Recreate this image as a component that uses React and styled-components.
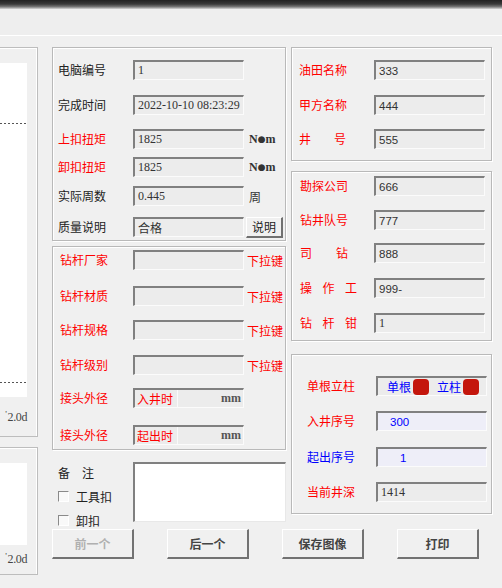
import React from "react";
import styled, { createGlobalStyle } from "styled-components";

const CJK = `"Noto Sans CJK SC", "Noto Sans", sans-serif`;
const SERIF = `"Liberation Serif", "Noto Sans CJK SC", serif`;
const SANS = `"Liberation Sans", "Noto Sans CJK SC", sans-serif`;
const RED = "#ff0000";
const BLUE = "#0000ff";

const Global = createGlobalStyle`
  html, body { margin: 0; padding: 0; background: #f0f0f0; }
  * { box-sizing: border-box; }
`;

const Page = styled.div`
  width: 502px;
  height: 588px;
  overflow: hidden;
  background: #f0f0f0;
  display: flex;
  flex-direction: column;
  font-family: ${CJK};
  font-size: 12px;
  color: #222;
`;

const TitleEdge = styled.div`
  height: 9px;
  flex: none;
  background: linear-gradient(#222 0%, #3a3a3a 45%, #777 75%, #d6d6d6 100%);
`;

const ToolStrip = styled.div`
  height: 27px;
  flex: none;
  background: #eeeeee;
  border-bottom: 1px solid #ffffff;
`;

const Body = styled.div`
  display: flex;
  padding-top: 11px;
`;

const LeftCol = styled.div`
  width: 38px;
  margin-right: 14px;
  flex: none;
  display: flex;
  flex-direction: column;
  gap: 10px;
`;

const ChartFrame = styled.div`
  height: ${(p) => p.$h}px;
  border: 1px solid #bdbdbd;
  border-left: none;
  box-shadow: inset -1px 0 0 #fff, inset 0 1px 0 #fff;
  padding: 15px 10px 0 0;
  display: flex;
  flex-direction: column;
`;

const Plot = styled.svg`
  display: block;
  width: 27px;
  height: ${(p) => p.$h}px;
  background: #fff;
`;

const AxisText = styled.div`
  margin-top: ${(p) => p.$mt}px;
  text-align: right;
  font-family: ${SERIF};
  font-size: 12px;
  line-height: 15px;
  color: #444;
  letter-spacing: -0.4px;
`;

const Tick = styled.span`
  font-size: 9px;
  vertical-align: 4px;
  margin-right: 1px;
`;

const RightArea = styled.div`
  width: 440px;
  display: flex;
  flex-direction: column;
`;

const Columns = styled.div`
  display: flex;
  gap: 5px;
  align-items: flex-start;
`;

const Column = styled.div`
  width: ${(p) => p.$w}px;
  display: flex;
  flex-direction: column;
`;

const Group = styled.div`
  height: ${(p) => p.$h}px;
  margin-top: ${(p) => p.$mt || 0}px;
  border: 1px solid #b9b9b9;
  box-shadow: inset 1px 1px 0 #fff, 1px 1px 0 #fff;
  padding-left: ${(p) => p.$pl}px;
  display: flex;
  flex-direction: column;
`;

const Row = styled.div`
  display: flex;
  align-items: center;
  height: 20px;
  flex: none;
  margin-top: ${(p) => p.$mt}px;
`;

const Label = styled.div`
  width: ${(p) => p.$w}px;
  flex: none;
  color: ${(p) => p.$c || "#222"};
  font-family: ${CJK};
  font-size: 12px;
  line-height: 14px;
  white-space: nowrap;
`;

const Spread = styled.span`
  display: inline-flex;
  justify-content: space-between;
  width: ${(p) => p.$w}px;
`;

const Field = styled.div`
  width: ${(p) => p.$w || 111}px;
  height: 20px;
  flex: none;
  background: ${(p) => p.$bg || "#ececec"};
  border-top: 2px solid #808080;
  border-left: 2px solid #808080;
  border-right: 1px solid #fbfbfb;
  border-bottom: 1px solid #fbfbfb;
  display: flex;
  align-items: center;
  justify-content: ${(p) => (p.$between ? "space-between" : "flex-start")};
  padding-left: ${(p) => (p.$pl != null ? p.$pl : 3)}px;
  padding-right: 2px;
  font-family: ${(p) => (p.$cjk ? CJK : p.$sans ? SANS : SERIF)};
  font-size: ${(p) => (p.$sans ? 11.5 : 12)}px;
  color: ${(p) => p.$c || "#333"};
  white-space: nowrap;
`;

const SubLabel = styled.span`
  height: 100%;
  display: flex;
  align-items: center;
  padding: 0 4px 0 2px;
  border-right: 1px solid #fafafa;
  color: ${RED};
  font-family: ${CJK};
  font-size: 12px;
`;

const MM = styled.span`
  font-family: ${SERIF};
  font-weight: bold;
  font-size: 12px;
  color: #555;
`;

const Unit = styled.span`
  margin-left: ${(p) => p.$ml}px;
  font-family: ${(p) => (p.$serif ? SERIF : CJK)};
  font-weight: ${(p) => (p.$serif ? "bold" : "normal")};
  font-size: 12px;
  color: ${(p) => p.$c || "#333"};
  white-space: nowrap;
`;

const Dot = styled.span`
  font-family: "DejaVu Sans", sans-serif;
  font-size: 9px;
  vertical-align: 1px;
`;

const SmallButton = styled.div`
  margin-left: 2px;
  width: 37px;
  height: 21px;
  border-top: 1px solid #fff;
  border-left: 1px solid #fff;
  border-right: 2px solid #707070;
  border-bottom: 2px solid #707070;
  display: flex;
  align-items: center;
  justify-content: center;
  font-size: 12px;
  color: #222;
`;

const Notes = styled.div`
  display: flex;
`;

const NotesLeft = styled.div`
  width: 81px;
  flex: none;
  padding: 12px 0 0 6px;
  display: flex;
  flex-direction: column;
  gap: 4px;
`;

const NoteLine = styled.div`
  height: 20px;
  display: flex;
  align-items: center;
  gap: 7px;
  font-size: 12px;
  color: #222;
`;

const CheckBox = styled.span`
  width: 11px;
  height: 11px;
  background: #f9f9f9;
  border-top: 1px solid #8a8a8a;
  border-left: 1px solid #8a8a8a;
  border-right: 1px solid #fff;
  border-bottom: 1px solid #fff;
`;

const TextArea = styled.div`
  margin-top: 12px;
  width: 153px;
  height: 60px;
  background: #fff;
  border-top: 2px solid #808080;
  border-left: 2px solid #808080;
  border-right: 1px solid #e8e8e8;
  border-bottom: 1px solid #e8e8e8;
`;

const ButtonRow = styled.div`
  display: flex;
  gap: 33px;
  margin-top: -1px;
`;

const Button = styled.div`
  width: 82px;
  height: 30px;
  border-top: 1px solid #fff;
  border-left: 1px solid #fff;
  border-right: 2px solid #727272;
  border-bottom: 2px solid #727272;
  background: #f0f0f0;
  display: flex;
  align-items: center;
  justify-content: center;
  font-size: 12px;
  font-weight: bold;
  color: ${(p) => (p.$disabled ? "#b0b0b0" : "#444")};
`;

const Choice = styled.span`
  color: ${BLUE};
  font-family: ${CJK};
  font-size: 12px;
  margin-left: ${(p) => p.$ml}px;
`;

const Swatch = styled.span`
  width: 16px;
  height: 16px;
  border-radius: 4px;
  background: #c4160c;
  margin-left: 2px;
`;

function Chart({ h, plotH, lines, axisMt }) {
  return (
    <ChartFrame $h={h}>
      <Plot $h={plotH} viewBox={`0 0 27 ${plotH}`}>
        {lines.map((y) => (
          <line key={y} x1="0" y1={y} x2="26" y2={y} stroke="#555" strokeWidth="1" strokeDasharray="2 2" />
        ))}
      </Plot>
      <AxisText $mt={axisMt}>
        <Tick>'</Tick>2.0d
      </AxisText>
    </ChartFrame>
  );
}

const NM = () => (
  <>
    N<Dot>●</Dot>m
  </>
);

export default function App() {
  return (
    <>
      <Global />
      <Page>
        <TitleEdge />
        <ToolStrip />
        <Body>
          <LeftCol>
            <Chart h={390} plotH={334} lines={[60.5, 319.5]} axisMt={10} />
            <Chart h={128} plotH={82} lines={[]} axisMt={4} />
          </LeftCol>
          <RightArea>
            <Columns>
              <Column $w={234}>
                <Group $h={194} $pl={5}>
                  <Row $mt={12}>
                    <Label $w={75}>电脑编号</Label>
                    <Field>1</Field>
                  </Row>
                  <Row $mt={15}>
                    <Label $w={75}>完成时间</Label>
                    <Field>2022-10-10 08:23:29</Field>
                  </Row>
                  <Row $mt={14}>
                    <Label $w={75} $c={RED}>上扣扭矩</Label>
                    <Field>1825</Field>
                    <Unit $ml={5} $serif><NM /></Unit>
                  </Row>
                  <Row $mt={8}>
                    <Label $w={75} $c={RED}>卸扣扭矩</Label>
                    <Field>1825</Field>
                    <Unit $ml={5} $serif><NM /></Unit>
                  </Row>
                  <Row $mt={9}>
                    <Label $w={75}>实际周数</Label>
                    <Field>0.445</Field>
                    <Unit $ml={5}>周</Unit>
                  </Row>
                  <Row $mt={11}>
                    <Label $w={75}>质量说明</Label>
                    <Field $cjk>合格</Field>
                    <SmallButton>说明</SmallButton>
                  </Row>
                </Group>
                <Group $h={204} $mt={5} $pl={7}>
                  {[
                    ["钻杆厂家", 3],
                    ["钻杆材质", 16],
                    ["钻杆规格", 14],
                    ["钻杆级别", 15],
                  ].map(([t, mt]) => (
                    <Row key={t} $mt={mt}>
                      <Label $w={73} $c={RED}>{t}</Label>
                      <Field />
                      <Unit $ml={3} $c={RED}>下拉键</Unit>
                    </Row>
                  ))}
                  <Row $mt={13}>
                    <Label $w={73} $c={RED}>接头外径</Label>
                    <Field $between $pl={0}>
                      <SubLabel>入井时</SubLabel>
                      <MM>mm</MM>
                    </Field>
                  </Row>
                  <Row $mt={17}>
                    <Label $w={73} $c={RED}>接头外径</Label>
                    <Field $between $pl={0}>
                      <SubLabel>起出时</SubLabel>
                      <MM>mm</MM>
                    </Field>
                  </Row>
                </Group>
                <Notes>
                  <NotesLeft>
                    <NoteLine>
                      <Spread $w={36}>
                        <span>备</span>
                        <span>注</span>
                      </Spread>
                    </NoteLine>
                    <NoteLine>
                      <CheckBox />
                      工具扣
                    </NoteLine>
                    <NoteLine>
                      <CheckBox />
                      卸扣
                    </NoteLine>
                  </NotesLeft>
                  <TextArea />
                </Notes>
              </Column>
              <Column $w={201}>
                <Group $h={114} $pl={7}>
                  <Row $mt={12}>
                    <Label $w={75} $c={RED}>油田名称</Label>
                    <Field $sans>333</Field>
                  </Row>
                  <Row $mt={15}>
                    <Label $w={75} $c={RED}>甲方名称</Label>
                    <Field $sans>444</Field>
                  </Row>
                  <Row $mt={14}>
                    <Label $w={75} $c={RED}>
                      <Spread $w={47}>
                        <span>井</span>
                        <span>号</span>
                      </Spread>
                    </Label>
                    <Field $sans>555</Field>
                  </Row>
                </Group>
                <Group $h={170} $mt={10} $pl={8}>
                  <Row $mt={4}>
                    <Label $w={74} $c={RED}>勘探公司</Label>
                    <Field $sans>666</Field>
                  </Row>
                  <Row $mt={14}>
                    <Label $w={74} $c={RED}>钻井队号</Label>
                    <Field $sans>777</Field>
                  </Row>
                  <Row $mt={13}>
                    <Label $w={74} $c={RED}>
                      <Spread $w={48}>
                        <span>司</span>
                        <span>钻</span>
                      </Spread>
                    </Label>
                    <Field $sans>888</Field>
                  </Row>
                  <Row $mt={15}>
                    <Label $w={74} $c={RED}>
                      <Spread $w={57}>
                        <span>操</span>
                        <span>作</span>
                        <span>工</span>
                      </Spread>
                    </Label>
                    <Field $sans>999-</Field>
                  </Row>
                  <Row $mt={15}>
                    <Label $w={74} $c={RED}>
                      <Spread $w={57}>
                        <span>钻</span>
                        <span>杆</span>
                        <span>钳</span>
                      </Spread>
                    </Label>
                    <Field>1</Field>
                  </Row>
                </Group>
                <Group $h={160} $mt={13} $pl={15}>
                  <Row $mt={21}>
                    <Label $w={69} $c={RED}>单根立柱</Label>
                    <Field $pl={0}>
                      <Choice $ml={9}>单根</Choice>
                      <Swatch />
                      <Choice $ml={8}>立柱</Choice>
                      <Swatch />
                    </Field>
                  </Row>
                  <Row $mt={15}>
                    <Label $w={69} $c={RED}>入井序号</Label>
                    <Field $sans $bg="#eeeef8" $c={BLUE} $pl={12}>300</Field>
                  </Row>
                  <Row $mt={16}>
                    <Label $w={69} $c={BLUE}>起出序号</Label>
                    <Field $sans $bg="#eeeef8" $c={BLUE} $pl={22}>1</Field>
                  </Row>
                  <Row $mt={15}>
                    <Label $w={69} $c={RED}>当前井深</Label>
                    <Field>1414</Field>
                  </Row>
                </Group>
              </Column>
            </Columns>
            <ButtonRow>
              <Button $disabled>前一个</Button>
              <Button>后一个</Button>
              <Button>保存图像</Button>
              <Button>打印</Button>
            </ButtonRow>
          </RightArea>
        </Body>
      </Page>
    </>
  );
}
